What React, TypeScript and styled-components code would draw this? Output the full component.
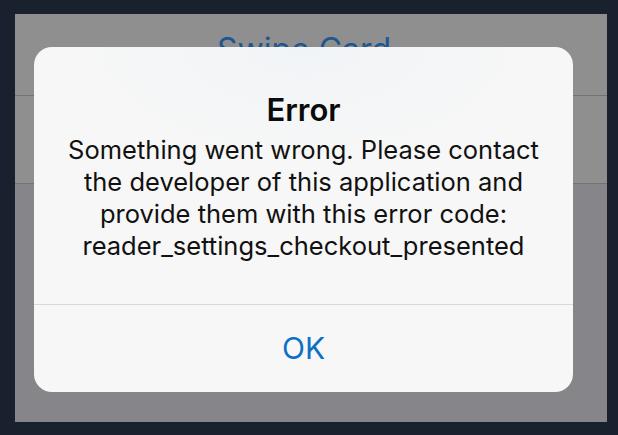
import styled, { createGlobalStyle } from 'styled-components';

const GlobalStyle = createGlobalStyle`
  html, body {
    margin: 0;
    padding: 0;
    background: #19212f;
  }
  * {
    box-sizing: border-box;
  }
`;

const Frame = styled.div`
  width: 618px;
  height: 435px;
  padding: 14px 11px 13px 15px;
  background: #19212f;
  font-family: Inter, "Noto Sans", "Liberation Sans", sans-serif;
`;

const Screen = styled.div`
  position: relative;
  height: 100%;
  display: flex;
  flex-direction: column;
  background: #868589;
  overflow: hidden;
`;

const Row = styled.div<{ $height: number }>`
  height: ${({ $height }) => $height}px;
  flex-shrink: 0;
  background: #8f8f8f;
  border-bottom: 1px solid #737373;
  display: flex;
  justify-content: center;
`;

const BackTitle = styled.div`
  margin: 16px 0 0 -14px;
  font-size: 32px;
  line-height: 40px;
  color: #1d5690;
`;

const Alert = styled.div`
  position: absolute;
  left: 19px;
  top: 33px;
  width: 539px;
  height: 345px;
  border-radius: 18px;
  background: radial-gradient(ellipse 45% 35% at 50% 0%, #f1f4f7 0%, #f7f7f7 100%);
  display: flex;
  flex-direction: column;
  overflow: hidden;
`;

const AlertBody = styled.div`
  padding: 46px 10px 42px;
  text-align: center;
  border-bottom: 1px solid #d8d8d8;
`;

const AlertTitle = styled.div`
  font-size: 31px;
  line-height: 34px;
  font-weight: 600;
  color: #0b0b0b;
  margin-bottom: 7px;
`;

const AlertMessage = styled.div`
  font-size: 25.5px;
  line-height: 32px;
  color: #111;
`;

const AlertButton = styled.button`
  flex: 1;
  border: none;
  background: transparent;
  font-family: inherit;
  font-size: 30px;
  color: #0b70c6;
  padding: 0 0 2px;
  cursor: pointer;
`;

export default function App() {
  return (
    <>
      <GlobalStyle />
      <Frame>
        <Screen>
          <Row $height={82}>
            <BackTitle>Swipe Card</BackTitle>
          </Row>
          <Row $height={88} />
          <Alert>
            <AlertBody>
              <AlertTitle>Error</AlertTitle>
              <AlertMessage>
                Something went wrong. Please contact
                <br />
                the developer of this application and
                <br />
                provide them with this error code:
                <br />
                reader_settings_checkout_presented
              </AlertMessage>
            </AlertBody>
            <AlertButton>OK</AlertButton>
          </Alert>
        </Screen>
      </Frame>
    </>
  );
}
